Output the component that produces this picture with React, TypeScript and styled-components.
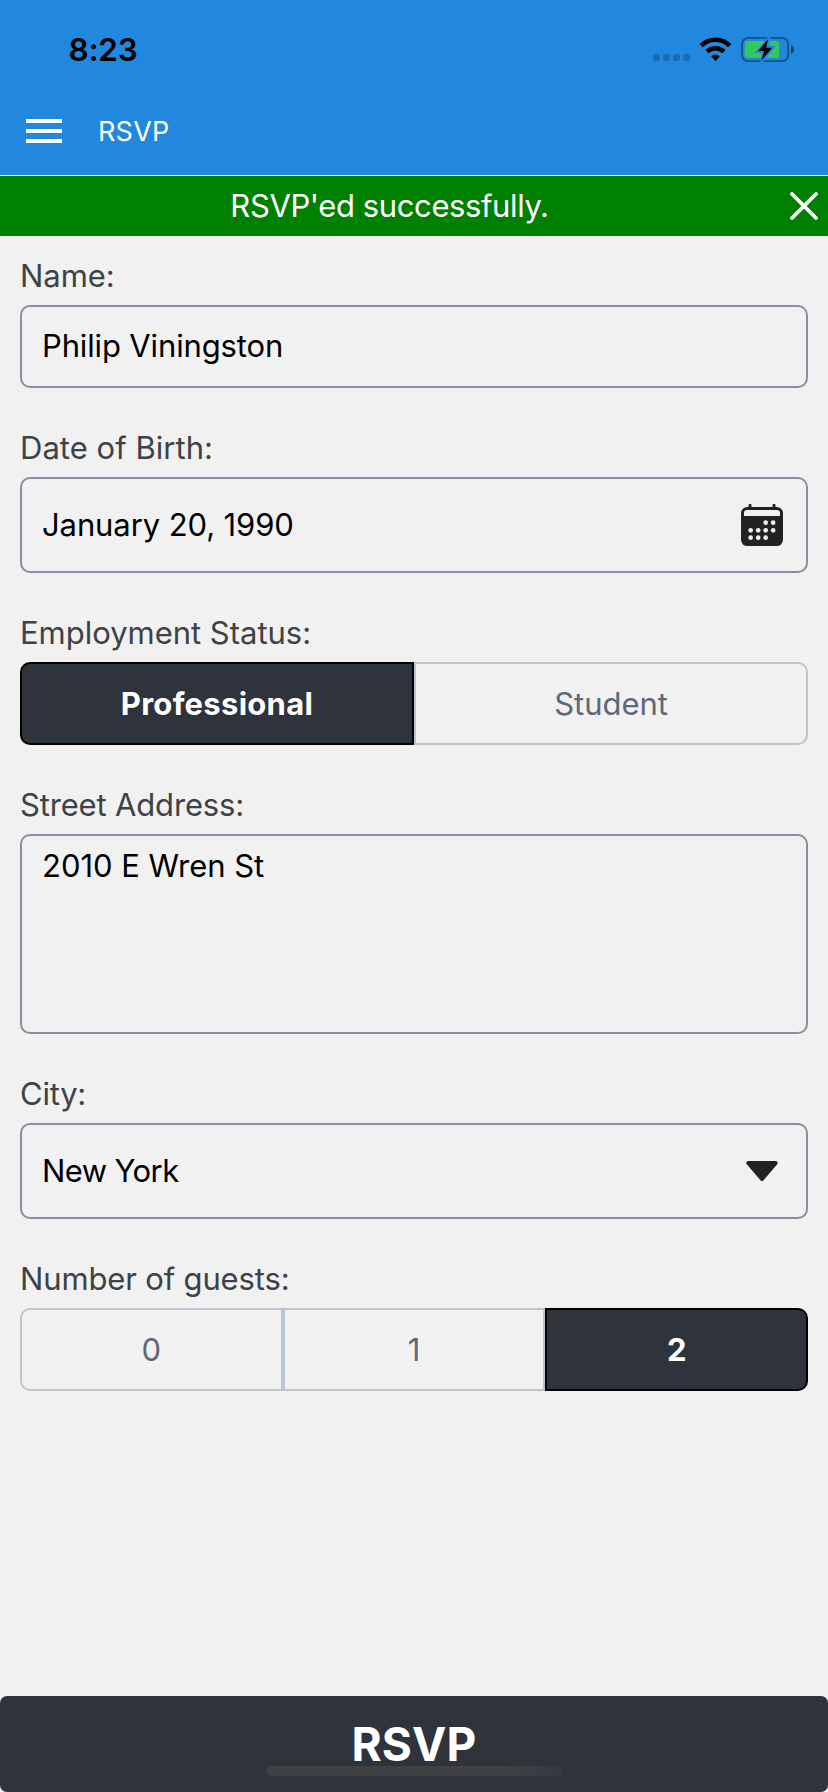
import React from 'react';
import styled, { createGlobalStyle, css } from 'styled-components';

const GlobalStyle = createGlobalStyle`
  *, *::before, *::after { box-sizing: border-box; }
  body {
    margin: 0;
    background: #f1f1f1;
    font-family: Inter, "Liberation Sans", sans-serif;
    font-size: 31px;
    font-kerning: normal;
  }
  button { font: inherit; margin: 0; padding: 0; border: 0; background: none; }
`;

const Screen = styled.div`
  width: 828px;
  height: 1792px;
  display: flex;
  flex-direction: column;
  background: #f1f1f1;
  overflow: hidden;
`;

const Header = styled.header`
  height: 176px;
  flex: none;
  background: #2288dd;
  border-bottom: 1px solid #fff;
  display: flex;
  flex-direction: column;
`;

const StatusBar = styled.div`
  height: 88px;
  padding: 11px 34px 0 68.5px;
  display: flex;
  align-items: center;
  justify-content: space-between;
`;

const Time = styled.span`
  font-size: 31.5px;
  line-height: 40px;
  font-weight: 600;
  letter-spacing: -0.18px;
`;

const NavBar = styled.nav`
  height: 86px;
  padding-left: 26px;
  display: flex;
  align-items: center;
  gap: 36px;
`;

const Title = styled.h1<{ $track: number }>`
  margin: 0;
  padding-top: 2px;
  color: #fff;
  font-size: 27px;
  line-height: 34px;
  font-weight: 400;
  letter-spacing: ${(p) => p.$track}px;
`;

const Banner = styled.div`
  height: 60px;
  flex: none;
  background: #008000;
  color: #fff;
  display: flex;
  align-items: center;
`;

const BannerText = styled.div<{ $track: number }>`
  flex: 1;
  padding-bottom: 2px;
  text-align: center;
  letter-spacing: ${(p) => p.$track}px;
`;

const Close = styled.button`
  width: 49px;
  height: 60px;
  display: flex;
  align-items: center;
  padding-left: 11px;
`;

const Form = styled.main`
  flex: 1;
  padding: 20px 20px 0;
  display: flex;
  flex-direction: column;
  gap: 40px;
`;

const Field = styled.section`
  display: flex;
  flex-direction: column;
`;

const Label = styled.label<{ $track: number }>`
  height: 49px;
  line-height: 40px;
  color: #3d4246;
  letter-spacing: ${(p) => p.$track}px;
`;

const Box = styled.div<{ $height: number; $align?: 'top' | 'raised' }>`
  height: ${(p) => p.$height}px;
  padding: ${(p) =>
    p.$align === 'top' ? '10px 23px 0 20px' : p.$align === 'raised' ? '0 23px 2px 20px' : '0 23px 0 20px'};
  border: 2px solid #8591a0;
  border-radius: 10px;
  color: #000;
  display: flex;
  align-items: ${(p) => (p.$align === 'top' ? 'flex-start' : 'center')};
  justify-content: space-between;
`;

const Value = styled.span<{ $track: number }>`
  line-height: 40px;
  letter-spacing: ${(p) => p.$track}px;
`;

const Segments = styled.div`
  height: 83px;
  display: flex;
`;

const Segment = styled.button<{ $selected?: boolean; $track?: number }>`
  flex: 1;
  border: 2px solid #bac5cf;
  color: #5d6878;
  letter-spacing: ${(p) => p.$track ?? 0}px;
  &:first-child { border-radius: 10px 0 0 10px; }
  &:last-child { border-radius: 0 10px 10px 0; }
  ${(p) =>
    p.$selected &&
    css`
      border-color: #000;
      background: #2f333c;
      color: #fff;
      font-weight: 700;
    `}
`;

const Submit = styled.button<{ $track: number }>`
  position: relative;
  height: 96px;
  flex: none;
  padding-top: 1px;
  border-radius: 7px;
  background: #2f333c;
  color: #fff;
  font-size: 46px;
  line-height: 95px;
  font-weight: 700;
  letter-spacing: ${(p) => p.$track}px;
`;

const HomeIndicator = styled.span`
  position: absolute;
  left: 266px;
  bottom: 16px;
  width: 296px;
  height: 10px;
  border-radius: 5px;
  background: linear-gradient(90deg, #404145 80%, #36393f);
`;

const StatusIcons = () => (
  <svg width="141" height="25" viewBox="653 37 141 25">
    <g fill="#000" opacity="0.2">
      {[653, 663, 673, 683].map((x) => (
        <rect key={x} x={x} y="54" width="7" height="7" rx="2" />
      ))}
    </g>
    <g fill="none" stroke="#000" strokeWidth="4.6">
      <path d="M701.2 45.6a20.5 20.5 0 0 1 28.6 0" />
      <path d="M707 51.7a12.3 12.3 0 0 1 17 0" />
    </g>
    <path d="M711.2 56.2a6.4 6.4 0 0 1 8.6 0L715.5 61z" />
    <rect x="742.1" y="37.9" width="46" height="23.2" rx="6" fill="none" stroke="#000" strokeOpacity="0.4" strokeWidth="1.8" />
    <path d="M791 45c3.9 1.6 3.9 7.6 0 9.2z" fillOpacity="0.5" />
    <rect x="744.8" y="41" width="34.4" height="17" rx="3" fill="#34c759" />
    <path d="M768.8 36L754.6 53h7.2l-1.6 10h1.8l14.2-17.2h-7.4l1.8-9.8z" fill="#2288dd" />
    <path d="M768 39.3L758.2 51h5.9l-2.7 9.5L772.2 47.7h-6z" />
  </svg>
);

const MenuIcon = () => (
  <svg width="36" height="24" viewBox="0 0 36 24" fill="#fff">
    <path d="M0 0h36v4H0zM0 10h36v4H0zM0 20h36v4H0z" />
  </svg>
);

const CloseIcon = () => (
  <svg width="28" height="28" viewBox="0 0 28 28" stroke="#fff" strokeWidth="3.8" strokeLinecap="round">
    <path d="M2 2l24 24M26 2L2 26" />
  </svg>
);

const dots = [
  [74, 56], [96.5, 56],
  [29, 79], [51.5, 79], [74, 79], [96.5, 79],
  [29, 101], [51.5, 101], [74, 101],
];

const CalendarIcon = () => (
  <svg width="42" height="42" viewBox="0 0 126 126">
    <path d="M27 4v12M99 4v12" stroke="#222" strokeWidth="9" strokeLinecap="round" />
    <rect y="9" width="126" height="117" rx="19" fill="#222" />
    <path d="M9 36v-8a10 10 0 0 1 10-10h88a10 10 0 0 1 10 10v8z" fill="#f1f1f1" />
    {dots.map(([x, y]) => (
      <circle key={`${x}-${y}`} cx={x} cy={y} r="7" fill="#f1f1f1" />
    ))}
  </svg>
);

const CaretIcon = () => (
  <svg width="42" height="20" viewBox="0 0 42 20">
    <path d="M7.3 2h27.4L21 18z" fill="#222" stroke="#222" strokeWidth="4" strokeLinejoin="round" />
  </svg>
);

export default function App() {
  return (
    <Screen>
      <GlobalStyle />
      <Header>
        <StatusBar>
          <Time>8:23</Time>
          <StatusIcons />
        </StatusBar>
        <NavBar>
          <MenuIcon />
          <Title $track={0.22}>RSVP</Title>
        </NavBar>
      </Header>
      <Banner>
        <BannerText $track={-0.39}>RSVP'ed successfully.</BannerText>
        <Close aria-label="Close"><CloseIcon /></Close>
      </Banner>
      <Form>
        <Field>
          <Label $track={-0.05}>Name:</Label>
          <Box $height={83} $align="raised"><Value $track={-0.14}>Philip Viningston</Value></Box>
        </Field>
        <Field>
          <Label $track={0.03}>Date of Birth:</Label>
          <Box $height={96}>
            <Value $track={-0.1}>January 20, 1990</Value>
            <CalendarIcon />
          </Box>
        </Field>
        <Field>
          <Label $track={-0.02}>Employment Status:</Label>
          <Segments>
            <Segment $selected $track={0.28}>Professional</Segment>
            <Segment $track={-0.05}>Student</Segment>
          </Segments>
        </Field>
        <Field>
          <Label $track={-0.16}>Street Address:</Label>
          <Box $height={200} $align="top"><Value $track={-0.02}>2010 E Wren St</Value></Box>
        </Field>
        <Field>
          <Label $track={-0.24}>City:</Label>
          <Box $height={96}>
            <Value $track={-0.6}>New York</Value>
            <CaretIcon />
          </Box>
        </Field>
        <Field>
          <Label $track={-0.15}>Number of guests:</Label>
          <Segments>
            <Segment>0</Segment>
            <Segment>1</Segment>
            <Segment $selected>2</Segment>
          </Segments>
        </Field>
      </Form>
      <Submit $track={0.1}>
        RSVP
        <HomeIndicator />
      </Submit>
    </Screen>
  );
}
